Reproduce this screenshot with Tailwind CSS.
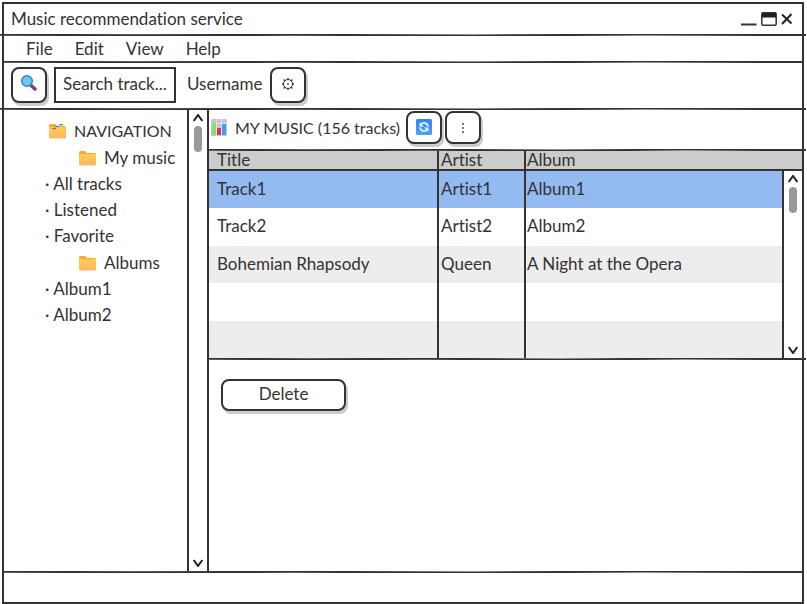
<!DOCTYPE html>
<html lang="en">
<head>
<meta charset="utf-8">
<meta name="viewport" content="width=device-width, initial-scale=1">
<title>Music recommendation service</title>
<script src="https://cdn.jsdelivr.net/npm/@tailwindcss/browser@4"></script>
</head>
<body class="bg-white text-[#333]">
<svg class="absolute h-0 w-0" aria-hidden="true">
  <defs>
    <linearGradient id="gold" x1="0" y1="0" x2="0" y2="1"><stop offset="0" stop-color="#ffcf4d"/><stop offset="1" stop-color="#ffb562"/></linearGradient>
    <linearGradient id="blue" x1="0" y1="0" x2="0" y2="1"><stop offset="0" stop-color="#2f86e8"/><stop offset="1" stop-color="#4ba0fa"/></linearGradient>
    <symbol id="folder" viewBox="0 0 17 16"><path d="M0 2.500Q0 1 1.500 1H6l2 2h7.500Q17 3 17 4.500V8H0z" fill="#f2ab30"/><path d="M0 5Q0 4 1 4h15q1 0 1 1v9q0 1.500-1.500 1.500h-14Q0 15.500 0 14z" fill="url(#gold)"/></symbol>
    <symbol id="line" viewBox="0 0 800 2" preserveAspectRatio="none"><path d="M0 .7 130 1.300 290 .8 470 1.500 640 .6 800 1.100" fill="none" stroke="#333" stroke-width="2"/></symbol>
  </defs>
</svg>
<div class="flex min-h-screen flex-col overflow-hidden pt-0.5 pl-0.5 pr-[3px] font-['Lato','Liberation_Sans',sans-serif] text-[17px] leading-5 [font-variant-ligatures:none]">
  <div class="flex grow flex-col border-2 border-[#333]">
    <header class="flex h-[30px] items-center justify-between pl-[7px] pr-[9px]">
      <h1>Music recommendation service</h1>
      <div class="flex items-center gap-1">
        <button aria-label="Minimize"><svg class="h-4 w-4" viewBox="0 0 16 16"><path d="M0 13.500h15.500" stroke="#333" stroke-width="2"/></svg></button>
        <button aria-label="Maximize"><svg class="h-4 w-4" viewBox="0 0 16 16"><rect x=".8" y="1.800" width="14.400" height="12.400" rx="1.200" fill="none" stroke="#333" stroke-width="1.500"/><path d="M1 2h14v4.500H1z" fill="#222"/></svg></button>
        <button aria-label="Close"><svg class="h-4 w-3" viewBox="0 0 12 16"><path d="m1 3.500 9.500 9m0-9.500L1 13" stroke="#222" stroke-width="2" fill="none"/></svg></button>
      </div>
    </header>
    <svg class="-mx-1 h-0.5 shrink-0 overflow-visible" aria-hidden="true"><use href="#line"/></svg>
    <nav class="flex h-[25px] items-center gap-[22px] px-[22px]" aria-label="Main menu">
      <button>File</button><button>Edit</button><button>View</button><button>Help</button>
    </nav>
    <svg class="h-0.5 shrink-0 overflow-visible" aria-hidden="true"><use href="#line"/></svg>
    <form class="flex h-[45px] items-center px-[7px] pb-0.5">
      <button type="button" aria-label="Search" class="grid h-9 w-9 place-items-center rounded-lg border-2 border-[#333] bg-white pb-1 shadow-[2px_3px_0_#ccc]">
        <svg class="h-[18px] w-[18px]" viewBox="0 0 18 18"><path d="m10.500 11 4.500 4" stroke="#7b3f86" stroke-width="3.600" stroke-linecap="round"/><circle cx="7" cy="7" r="5.300" fill="#5fcdf0" stroke="#4b79bd" stroke-width="1.500"/></svg>
      </button>
      <input type="text" aria-label="Search track" placeholder="Search track..." class="ml-[7px] h-9 w-[122px] border-2 border-[#333] bg-white pl-[7px] pb-0.5 placeholder:text-[#333] outline-none">
      <span class="ml-[11px] pb-0.5">Username</span>
      <button type="button" aria-label="Settings" class="ml-[7px] grid h-9 w-9 place-items-center rounded-lg border-2 border-[#333] bg-white pb-0.5 shadow-[2px_3px_0_#ccc]">
        <svg class="h-3.5 w-3.5" viewBox="0 0 14 14" fill="none" stroke="#333"><circle cx="7" cy="7" r="4.500"/><circle cx="7" cy="7" r=".5" fill="#333"/><path d="M7 1v1.500M7 11.500V13M1 7h1.500M11.500 7H13M2.500 2.500l1.200 1.200M10.300 10.300l1.200 1.200M11.500 2.500l-1.200 1.200M3.700 10.300l-1.200 1.200" stroke-width="1.300"/></svg>
      </button>
    </form>
    <svg class="-mx-1 h-0.5 shrink-0 overflow-visible" aria-hidden="true"><use href="#line"/></svg>
    <div class="flex grow">
      <aside class="flex w-[205px] shrink-0 border-r-2 border-[#333]">
        <ul class="grow pt-[7px] leading-[26px]">
          <li class="flex h-[27px] items-center gap-2 pl-[45px] text-base"><svg class="h-4 w-[17px]" viewBox="0 0 17 16" aria-hidden="true"><use href="#folder"/><path d="M3 5.500h4" stroke="#ee4f4f" stroke-width="1.300"/><path d="M6 3.500h4" stroke="#3e82d8" stroke-width="1.300"/><path d="M10 1.700h4" stroke="#3ea06a" stroke-width="1.300"/></svg>NAVIGATION</li>
          <li class="flex h-[27px] items-center gap-2 pl-[75px]"><svg class="h-4 w-[17px]" viewBox="0 0 17 16" aria-hidden="true"><use href="#folder"/></svg>My music</li>
          <li class="pl-[41px]">· All tracks</li>
          <li class="pl-[41px]">· Listened</li>
          <li class="pl-[41px]">· Favorite</li>
          <li class="flex h-[27px] items-center gap-2 pl-[75px]"><svg class="h-4 w-[17px]" viewBox="0 0 17 16" aria-hidden="true"><use href="#folder"/></svg>Albums</li>
          <li class="pl-[41px]">· Album1</li>
          <li class="pl-[41px]">· Album2</li>
        </ul>
        <div class="flex w-5 shrink-0 flex-col items-center border-l-2 border-[#333] py-1">
          <svg class="h-2 w-2.5" viewBox="0 0 10 8" fill="none" stroke="#222" stroke-width="2"><path d="m.7 7 4.300-6 4.300 6"/></svg>
          <div class="mt-1 h-[26px] w-2 rounded-full bg-[#999]"></div>
          <svg class="mt-auto h-2 w-2.5" viewBox="0 0 10 8" fill="none" stroke="#222" stroke-width="2"><path d="m.7 1 4.300 6 4.300-6"/></svg>
        </div>
      </aside>
      <main class="flex min-w-0 grow flex-col">
        <div class="flex h-[39px] items-center pb-1 pl-0.5">
          <svg class="h-[17px] w-4 shrink-0" viewBox="0 0 16 17"><rect width="16" height="17" rx="1" fill="#c9c4d0"/><path d="M0 4.500h16M5.500 0v17M10.500 0v17" stroke="#eee" stroke-width=".7"/><path d="M1 4h4v12H1z" fill="#84e45b"/><path d="M6 9h4v7H6z" fill="#df2a70"/><path d="M11 5h4v11h-4z" fill="#35a4e8"/></svg>
          <h2 class="ml-2 min-w-[171px] whitespace-nowrap text-base">MY MUSIC (156 tracks)</h2>
          <button aria-label="Refresh" class="grid h-[33px] w-9 place-items-center rounded-lg border-2 border-[#333] bg-white pb-0.5 shadow-[2px_3px_0_#ccc]">
            <svg class="h-4 w-4" viewBox="0 0 16 16"><rect width="16" height="16" rx="1.500" fill="url(#blue)"/><path d="M12 7.500C11.500 3.500 7 3 5 5.500M4 8.500c.5 4 5 4.500 7 2" stroke="#e4f1ff" stroke-width="1.800" fill="none"/><path d="M3.500 3v4.500H8zM12.500 13V8.500H8z" fill="#e4f1ff"/></svg>
          </button>
          <button aria-label="More" class="ml-[3px] grid h-[33px] w-9 place-items-center rounded-lg border-2 border-[#333] bg-white shadow-[2px_3px_0_#ccc]">
            <svg class="h-3 w-1" viewBox="0 0 4 12" fill="#333"><circle cx="2" cy="2" r=".9"/><circle cx="2" cy="6" r=".9"/><circle cx="2" cy="10" r=".9"/></svg>
          </button>
        </div>
        <svg class="-mr-1 h-0.5 shrink-0 overflow-visible" aria-hidden="true"><use href="#line"/></svg>
        <table class="w-full table-fixed border-separate border-spacing-0 text-left">
          <colgroup><col class="w-[230px]"><col class="w-[87px]"><col><col class="w-5"></colgroup>
          <thead class="bg-[#ccc]">
            <tr class="h-5">
              <th class="border-r-2 border-b-2 border-[#333] p-0 pl-2 leading-[18px] font-normal">Title</th>
              <th class="border-r-2 border-b-2 border-[#333] p-0 pl-0.5 leading-[18px] font-normal">Artist</th>
              <th class="border-b-2 border-[#333] p-0 pl-px leading-[18px] font-normal">Album</th>
              <td class="border-b-2 border-[#333] p-0"></td>
            </tr>
          </thead>
          <tbody>
            <tr class="h-[37px] bg-[#94baf2]">
              <td class="border-r-2 border-[#333] p-0 pb-0.5 pl-2">Track1</td><td class="border-r-2 border-[#333] p-0 pb-0.5 pl-0.5">Artist1</td><td class="p-0 pb-0.5 pl-px">Album1</td>
              <td rowspan="5" class="border-l-2 border-[#333] bg-white p-0">
                <div class="flex h-[187px] flex-col items-center py-1">
                  <svg class="h-2 w-2.5" viewBox="0 0 10 8" fill="none" stroke="#222" stroke-width="2"><path d="m.7 7 4.300-6 4.300 6"/></svg>
                  <div class="mt-1 h-[26px] w-2 rounded-full bg-[#999]"></div>
                  <svg class="mt-auto h-2 w-2.5" viewBox="0 0 10 8" fill="none" stroke="#222" stroke-width="2"><path d="m.7 1 4.300 6 4.300-6"/></svg>
                </div>
              </td>
            </tr>
            <tr class="h-[38px]"><td class="border-r-2 border-[#333] p-0 pb-0.5 pl-2">Track2</td><td class="border-r-2 border-[#333] p-0 pb-0.5 pl-0.5">Artist2</td><td class="p-0 pb-0.5 pl-px">Album2</td></tr>
            <tr class="h-[37px] bg-[#ededed]"><td class="border-r-2 border-[#333] p-0 pb-0.5 pl-2">Bohemian Rhapsody</td><td class="border-r-2 border-[#333] p-0 pb-0.5 pl-0.5">Queen</td><td class="p-0 pb-0.5 pl-px">A Night at the Opera</td></tr>
            <tr class="h-[38px]"><td class="border-r-2 border-[#333] p-0"></td><td class="border-r-2 border-[#333] p-0"></td><td class="p-0"></td></tr>
            <tr class="h-[37px] bg-[#ededed]"><td class="border-r-2 border-[#333] p-0"></td><td class="border-r-2 border-[#333] p-0"></td><td class="p-0"></td></tr>
          </tbody>
        </table>
        <svg class="-mr-1 h-0.5 shrink-0 overflow-visible" aria-hidden="true"><use href="#line"/></svg>
        <button class="mt-[19px] ml-3 h-8 w-[125px] rounded-lg border-2 border-[#333] bg-white pb-0.5 shadow-[2px_3px_0_#ccc]">Delete</button>
      </main>
    </div>
    <svg class="h-0.5 shrink-0 overflow-visible" aria-hidden="true"><use href="#line"/></svg>
    <footer class="h-[29px] shrink-0"></footer>
  </div>
</div>
</body>
</html>
